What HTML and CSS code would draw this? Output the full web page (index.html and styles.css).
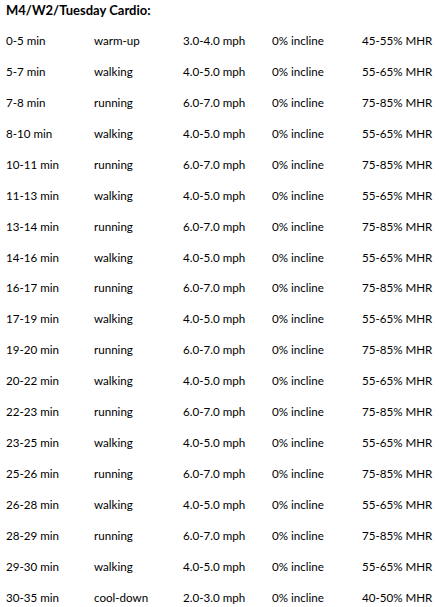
FILE: index.html
```html
<!DOCTYPE html>
<html>
<head>
<meta charset="utf-8">
<link rel="stylesheet" href="styles.css">
</head>
<body>
<div class="sheet">
  <div class="title">M4/W2/Tuesday Cardio:</div>
  <div class="row"><span>0-5 min</span><span>warm-up</span><span>3.0-4.0 mph</span><span>0% incline</span><span>45-55% MHR</span></div>
  <div class="row"><span>5-7 min</span><span>walking</span><span>4.0-5.0 mph</span><span>0% incline</span><span>55-65% MHR</span></div>
  <div class="row"><span>7-8 min</span><span>running</span><span>6.0-7.0 mph</span><span>0% incline</span><span>75-85% MHR</span></div>
  <div class="row"><span>8-10 min</span><span>walking</span><span>4.0-5.0 mph</span><span>0% incline</span><span>55-65% MHR</span></div>
  <div class="row"><span>10-11 min</span><span>running</span><span>6.0-7.0 mph</span><span>0% incline</span><span>75-85% MHR</span></div>
  <div class="row"><span>11-13 min</span><span>walking</span><span>4.0-5.0 mph</span><span>0% incline</span><span>55-65% MHR</span></div>
  <div class="row"><span>13-14 min</span><span>running</span><span>6.0-7.0 mph</span><span>0% incline</span><span>75-85% MHR</span></div>
  <div class="row"><span>14-16 min</span><span>walking</span><span>4.0-5.0 mph</span><span>0% incline</span><span>55-65% MHR</span></div>
  <div class="row"><span>16-17 min</span><span>running</span><span>6.0-7.0 mph</span><span>0% incline</span><span>75-85% MHR</span></div>
  <div class="row"><span>17-19 min</span><span>walking</span><span>4.0-5.0 mph</span><span>0% incline</span><span>55-65% MHR</span></div>
  <div class="row"><span>19-20 min</span><span>running</span><span>6.0-7.0 mph</span><span>0% incline</span><span>75-85% MHR</span></div>
  <div class="row"><span>20-22 min</span><span>walking</span><span>4.0-5.0 mph</span><span>0% incline</span><span>55-65% MHR</span></div>
  <div class="row"><span>22-23 min</span><span>running</span><span>6.0-7.0 mph</span><span>0% incline</span><span>75-85% MHR</span></div>
  <div class="row"><span>23-25 min</span><span>walking</span><span>4.0-5.0 mph</span><span>0% incline</span><span>55-65% MHR</span></div>
  <div class="row"><span>25-26 min</span><span>running</span><span>6.0-7.0 mph</span><span>0% incline</span><span>75-85% MHR</span></div>
  <div class="row"><span>26-28 min</span><span>walking</span><span>4.0-5.0 mph</span><span>0% incline</span><span>55-65% MHR</span></div>
  <div class="row"><span>28-29 min</span><span>running</span><span>6.0-7.0 mph</span><span>0% incline</span><span>75-85% MHR</span></div>
  <div class="row"><span>29-30 min</span><span>walking</span><span>4.0-5.0 mph</span><span>0% incline</span><span>55-65% MHR</span></div>
  <div class="row"><span>30-35 min</span><span>cool-down</span><span>2.0-3.0 mph</span><span>0% incline</span><span>40-50% MHR</span></div>
</div>
</body>
</html>
```

FILE: styles.css
```css
html, body {
  margin: 0;
  padding: 0;
  background: #ffffff;
}
.sheet {
  display: grid;
  row-gap: 10px;
  padding-left: 6px;
  font-family: Lato, "Liberation Sans", sans-serif;
  font-size: 11.6px;
  line-height: 20.94px;
  color: #000000;
  white-space: nowrap;
}
.title {
  font-weight: bold;
  font-size: 13px;
}
.row {
  display: grid;
  grid-template-columns: 88px 89px 89px 90px auto;
}
```
